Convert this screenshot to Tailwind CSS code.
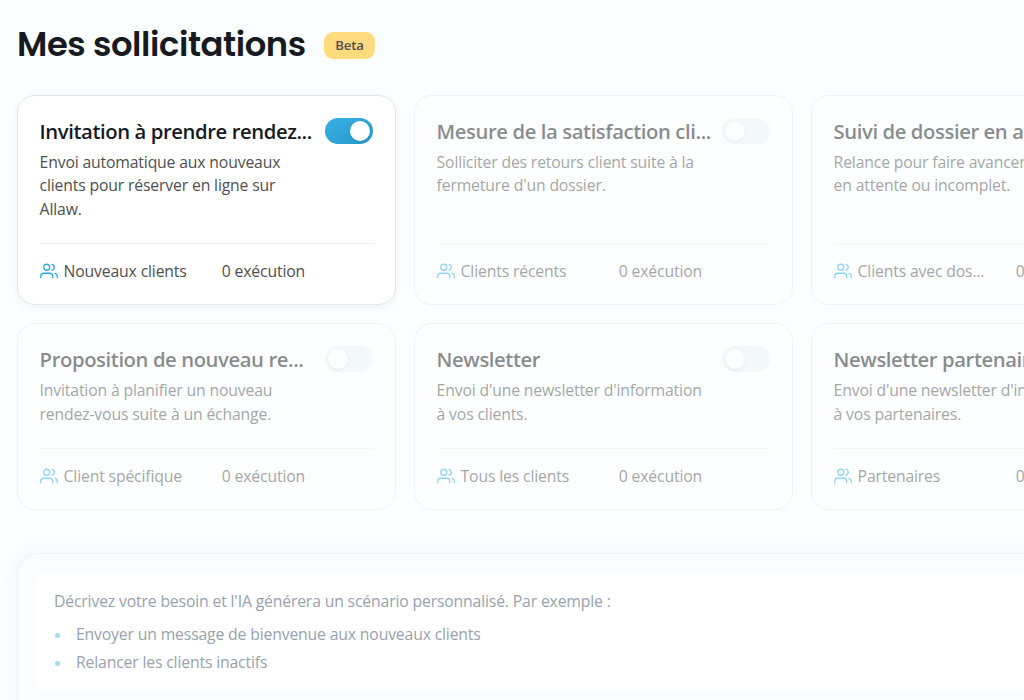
<!DOCTYPE html>
<html lang="fr">
<head>
<meta charset="utf-8">
<title>Mes sollicitations</title>
<script src="https://cdn.jsdelivr.net/npm/@tailwindcss/browser@4"></script>
</head>
<body class="h-[700px] overflow-hidden bg-[#fafeff] font-['Open_Sans','Noto_Sans',sans-serif] text-[15.75px] leading-[23.63px] tracking-[-0.01em] text-[#4f4f4f]">
<svg class="hidden">
  <symbol id="users" viewBox="0 0 24 24" fill="none" stroke="currentColor" stroke-width="1.7" stroke-linecap="round" stroke-linejoin="round">
    <path d="M17 21v-2a4 4 0 0 0-4-4H5a4 4 0 0 0-4 4v2"/><circle cx="9" cy="7" r="4"/><path d="M23 21v-2a4 4 0 0 0-3-3.87M16 3.13a4 4 0 0 1 0 7.75"/>
  </symbol>
</svg>
<header class="flex h-[95px] items-center pl-[17px] pb-[5px]">
  <h1 class="w-[307px] whitespace-nowrap pb-px font-['Poppins','Inter',sans-serif] text-[33.75px] font-semibold leading-[40px] tracking-[-0.012em] text-[#171a21]">Mes sollicitations</h1>
  <span class="flex h-[27px] w-[51px] items-center justify-center rounded-[9px] bg-[#ffdb7d] pt-px text-[13.2px] font-semibold">Beta</span>
</header>
<main class="w-[1200px] pl-[17px]">
  <section id="cards" class="grid grid-cols-[379px_379px_379px] grid-rows-[210px_187px] gap-[18px]"></section>
  <section class="mt-[43px] h-[300px] rounded-[22px] border border-[#eff3f6] bg-[#f9fdff] px-[18px] pt-[19px] shadow-[0_0_22px_rgba(30,60,80,0.05)]">
    <div class="h-[118px] rounded-[13px] bg-white px-[18px] pt-[17px] text-[#98a2ad]">
      <p>Décrivez votre besoin et l'IA générera un scénario personnalisé. Par exemple :</p>
      <ul class="mt-[9px] flex flex-col gap-[4.5px]">
        <li class="flex items-center"><i class="mr-[16px] mt-[2.4px] ml-[1px] size-[5px] rounded-full bg-[#a5dcf2]"></i>Envoyer un message de bienvenue aux nouveaux clients</li>
        <li class="flex items-center"><i class="mr-[16px] mt-[2px] ml-[1px] size-[5px] rounded-full bg-[#a5dcf2]"></i>Relancer les clients inactifs</li>
      </ul>
    </div>
  </section>
</main>
<script>
const cards = [
  ["Invitation à prendre rendez...", "Envoi automatique aux nouveaux<br>clients pour réserver en ligne sur<br>Allaw.", "Nouveaux clients", true],
  ["Mesure de la satisfaction cli...", "Solliciter des retours client suite à la<br>fermeture d'un dossier.", "Clients récents"],
  ["Suivi de dossier en attente", "Relance pour faire avancer un dossier<br>en attente ou incomplet.", "Clients avec dos..."],
  ["Proposition de nouveau re...", "Invitation à planifier un nouveau<br>rendez-vous suite à un échange.", "Client spécifique"],
  ["Newsletter", "Envoi d'une newsletter d'information<br>à vos clients.", "Tous les clients"],
  ["Newsletter partenaires", "Envoi d'une newsletter d'information<br>à vos partenaires.", "Partenaires"]
];
document.getElementById("cards").innerHTML = cards.map(([title, text, who, on], i) => `
  <article class="flex flex-col rounded-[18px] border bg-white pr-[22px] pl-[21.6px] ${on ? "border-[#e4e8ed] shadow-[0_2px_9px_rgba(30,60,80,0.06)]" : "border-[#e2e8ef] opacity-50"}">
    <div class="mt-[22px] flex h-[26px] items-center justify-between">
      <h2 class="whitespace-nowrap pt-[1px] text-[20.25px] font-semibold tracking-[-0.02em] text-[#171a21]">${title}</h2>
      <span class="flex h-[26px] w-[48px] shrink-0 items-center rounded-full px-[3px] ${on ? "justify-end bg-linear-to-br from-[#36b1e2] to-[#2998cb]" : "bg-[#eef3f7]"}"><i class="size-[20px] rounded-full bg-white shadow-[0_1px_3px_rgba(0,0,0,0.12)]"></i></span>
    </div>
    <p class="${i > 2 ? "mt-[6.9px]" : "mt-[6.5px]"} whitespace-nowrap">${text}</p>
    <div class="mt-auto grid h-[61px] grid-cols-2 items-center gap-[31px] border-t border-[#edf1f4] pb-[5px]">
      <div class="flex items-center gap-[6px] whitespace-nowrap"><svg class="mb-px size-[18px] shrink-0 text-[#2aabe0]"><use href="#users"/></svg>${who}</div>
      <div class="whitespace-nowrap">0 exécution</div>
    </div>
  </article>`).join("");
</script>
</body>
</html>
